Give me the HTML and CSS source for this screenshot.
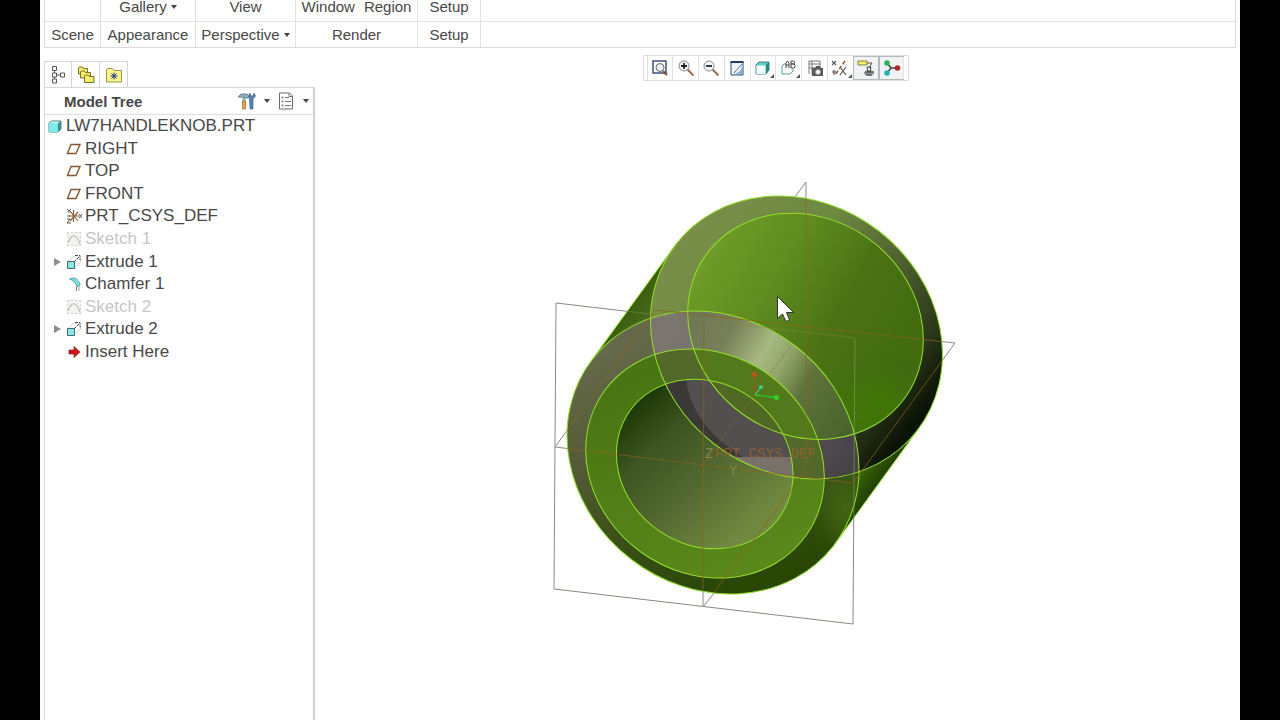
FILE: index.html
```html
<!DOCTYPE html>
<html lang="en">
<head>
<meta charset="UTF-8">
<meta name="viewport" content="width=device-width, initial-scale=1.0">
<title>LW7HANDLEKNOB.PRT</title>
<link rel="stylesheet" href="styles.css">
</head>
<body>
    <!-- shared tree icons -->
    <svg class="symbols" aria-hidden="true">
        <symbol id="plane" viewBox="0 0 16 16">
            <path d="M5 3.500h9L10 12.500H1.500z" fill="#fff" stroke="#84582f" stroke-width="1.400"/>
        </symbol>
        <symbol id="sketch" viewBox="0 0 16 16">
            <rect x="1" y="1" width="14" height="14" fill="#f3f4ef"/>
            <path d="M1 1.500h14M1 14.500h14M1.500 1v14M14.500 1v14" stroke="#d2d5ca" stroke-dasharray="2 2"/>
            <path d="M2 12C4 7 6 4 8.500 5s4 3 5.500 8" fill="none" stroke="#bfc4b8" stroke-width="1.300"/>
        </symbol>
        <symbol id="extrude" viewBox="0 0 16 16">
            <path d="M2 7.500l6-5.500M8.500 14l6-6V4" stroke="#b0b6b6" fill="none" stroke-dasharray="2 1"/>
            <path d="M8 8l5.500-5.500M9 1.500h5V6" stroke="#3c4747" fill="none" stroke-dasharray="3 1"/>
            <path d="M1.500 7.500h7v7h-7z" fill="#8de8e4" stroke="#3e6c70"/>
        </symbol>
    </svg>

    <div class="app">
        <div class="ribbon">
            <div class="ribbon-row ribbon-commands">
                <div class="cell scene"></div>
                <div class="cell appearance"><button type="button">Gallery<span class="caret"></span></button></div>
                <div class="cell perspective"><button type="button">View</button></div>
                <div class="cell render"><button type="button">Window</button><button type="button">Region</button></div>
                <div class="cell setup"><button type="button">Setup</button></div>
            </div>
            <div class="ribbon-row ribbon-groups">
                <div class="cell scene">Scene</div>
                <div class="cell appearance">Appearance</div>
                <div class="cell perspective"><button type="button">Perspective<span class="caret"></span></button></div>
                <div class="cell render">Render</div>
                <div class="cell setup">Setup</div>
            </div>
        </div>

        <div class="workspace">
            <aside class="sidebar">
                <div class="tabs">
                    <button type="button" class="tab active" aria-label="Model Tree">
                        <svg class="icon" viewBox="0 0 18 18"><path d="M5.500 4v10M5.500 9H11" stroke="#666" fill="none"/><path d="M3.500 .5h4v4h-4zM3.500 7h4v4h-4zM3.500 13h4v4h-4zM11.500 7h4v4h-4z" fill="#fff" stroke="#555"/></svg>
                    </button>
                    <button type="button" class="tab" aria-label="Folder Browser">
                        <svg class="icon" viewBox="0 0 18 18"><g fill="#f2ec68" stroke="#77702c"><path d="M1.500 8V2l1-1h3l1 1.500h4V8z"/><path d="M3.500 12V6l1-1h3l1 1.500h5V12z"/><path d="M7.500 16.500V10l1-1h3l1 1.500h4.500v6z"/></g></svg>
                    </button>
                    <button type="button" class="tab" aria-label="Favorites">
                        <svg class="icon" viewBox="0 0 18 18"><path d="M1.500 16V4l1-1.500h5L9 4.500h7.500V16z" fill="#f8f58a" stroke="#9a9650"/><path d="M9 6.500v7M5.500 10h7M6.500 7.500l5 5M11.500 7.500l-5 5" stroke="#233a86"/></svg>
                    </button>
                </div>
                <div class="panel">
                    <div class="panel-header">
                        <h2>Model Tree</h2>
                        <button type="button" class="menu" aria-label="Settings">
                            <svg class="icon" viewBox="0 0 18 18"><path d="M0 5l3-3h6l2 2-1 2H7L3 5z" fill="#8faebb" stroke="#54707d" stroke-width=".8"/><path d="M4.500 6h3v5h-3z" fill="#78b9c4"/><path d="M4.500 9h3v8h-3z" fill="#f0a33c" stroke="#9a642b" stroke-width=".7"/><path d="M11.500 7l-1-3L12 1l1 3h2l1-3 1.500 3-2.500 3v10h-3z" fill="#4f83c2" stroke="#53616e" stroke-width=".7"/></svg>
                            <span class="caret"></span>
                        </button>
                        <button type="button" class="menu" aria-label="Show">
                            <svg class="icon" viewBox="0 0 18 18"><path d="M2.500 1h10l3 3v13h-13z" fill="#fff" stroke="#6c6c6c"/><path d="M12 1v3.500h3.500M8 5.500h4M8 9.500h6M8 13.500h6" fill="none" stroke="#777"/><circle cx="5.500" cy="5.500" r="1" fill="#777"/><circle cx="5.500" cy="9.500" r="1" fill="#777"/><circle cx="5.500" cy="13.500" r="1" fill="#777"/></svg>
                            <span class="caret"></span>
                        </button>
                    </div>
                    <ul class="tree">
                        <li class="root"><svg class="node" viewBox="0 0 16 16"><path d="M2 5l3-2h9v8l-3 3H2z" fill="#d8fafa" stroke="#4b7c83"/><path d="M2 5h9v9H2z" fill="#7eeaea"/><path d="M11 5l3-2v8l-3 3z" fill="#3f8f96"/></svg>LW7HANDLEKNOB.PRT</li>
                        <li><svg class="node"><use href="#plane"/></svg>RIGHT</li>
                        <li><svg class="node"><use href="#plane"/></svg>TOP</li>
                        <li><svg class="node"><use href="#plane"/></svg>FRONT</li>
                        <li><svg class="node" viewBox="0 0 16 16"><path d="M7.500 2v12M3 8h10M4 13l8-9M4 3l8 10" stroke="#8f5d35" stroke-width="1.200"/><path d="M1 1l2 2 2-2M3 3v2M1 11h3l-3 4h4M13 6l3 4M16 6l-3 4M1 8h3" stroke="#444" fill="none" stroke-width=".9"/></svg>PRT_CSYS_DEF</li>
                        <li class="hidden-item"><svg class="node"><use href="#sketch"/></svg>Sketch 1</li>
                        <li><button type="button" class="expand" aria-label="Expand Extrude 1"></button><svg class="node"><use href="#extrude"/></svg>Extrude 1</li>
                        <li><svg class="node" viewBox="0 0 16 16"><path d="M3 3h3l7 7v5" fill="none" stroke="#9aa0a0"/><path d="M4 3l4-1c3 1 6 4 6 7l-3 2C10 7 8 5 4 3z" fill="#7bdfe4" stroke="#5aa0a8"/><path d="M10.500 11v4" stroke="#777"/></svg>Chamfer 1</li>
                        <li class="hidden-item"><svg class="node"><use href="#sketch"/></svg>Sketch 2</li>
                        <li><button type="button" class="expand" aria-label="Expand Extrude 2"></button><svg class="node"><use href="#extrude"/></svg>Extrude 2</li>
                        <li><svg class="node" viewBox="0 0 16 16"><path d="M3 6h5V2.500L14 8l-6 5.500V10H3z" fill="#cf1515" stroke="#8c0d0d" stroke-width=".6"/></svg>Insert Here</li>
                    </ul>
                </div>
            </aside>

            <main class="viewport">
                <div class="toolbar">
                    <button type="button" aria-label="Refit"><svg class="icon" viewBox="0 0 18 18"><path d="M2 2h13v12H2z" fill="#fff" stroke="#3c5378" stroke-width="1.500"/><path d="M12 12l4 4" stroke="#7c4d3a" stroke-width="2"/><circle cx="9" cy="8.500" r="4" fill="#e9f2f4" stroke="#666"/></svg></button>
                    <button type="button" aria-label="Zoom In"><svg class="icon" viewBox="0 0 18 18"><path d="M10.500 10.500l6 6" stroke="#9b694e" stroke-width="2"/><circle cx="7" cy="7" r="5" fill="#f3f7f7" stroke="#888"/><path d="M4 7h6M7 4v6" stroke="#222" stroke-width="1.800"/></svg></button>
                    <button type="button" aria-label="Zoom Out"><svg class="icon" viewBox="0 0 18 18"><path d="M10.500 10.500l6 6" stroke="#9b694e" stroke-width="2"/><circle cx="7" cy="7" r="5" fill="#f3f7f7" stroke="#888"/><path d="M4 7h6" stroke="#222" stroke-width="1.800"/></svg></button>
                    <button type="button" aria-label="Repaint"><svg class="icon" viewBox="0 0 18 18"><path d="M3 3h12v13H3z" fill="#eef7fb" stroke="#2d4c84"/><path d="M2.500 3h13" stroke="#1f3c78" stroke-width="2"/><path d="M4 15c5 0 10-3 10-9v9z" fill="#88afd4"/><path d="M6 14l8-9" stroke="#5b6d80"/></svg></button>
                    <button type="button" class="more" aria-label="Display Style"><svg class="icon" viewBox="0 0 18 18"><path d="M2 6l3-3h10v8l-3 4H2z" fill="#60cfc9" stroke="#47817f"/><path d="M2.500 6.500h9V15h-9z" fill="#f3ffff"/><path d="M12 6l3-3v8l-3 4z" fill="#248c87"/></svg></button>
                    <button type="button" class="more" aria-label="Saved Orientations"><svg class="icon" viewBox="0 0 18 18"><path d="M2 7l2-2h2M2 7v8h8l3-3v-2" fill="none" stroke="#54a5a7"/><path d="M6 9V4l1.500-2L9 4v5M6 6h3M11 9V2h2.500l1 1v1l-1 1H11h3l1 1v2l-1 1z" fill="none" stroke="#444"/></svg></button>
                    <button type="button" aria-label="View Manager"><svg class="icon" viewBox="0 0 18 18"><path d="M3 15V2h11v7M3 5h11M6 2v13M3 9h6" fill="none" stroke="#777"/><path d="M6 9h3l1-2h4l1 2h2v8H6z" fill="#565c59"/><circle cx="12" cy="13" r="2.500" fill="#fff" stroke="#999"/></svg></button>
                    <button type="button" class="more" aria-label="Datum Display"><svg class="icon" viewBox="0 0 18 18"><path d="M1 2l4 4M5 2L1 6M9 8l6 8M15 8l-6 8M3 11v5M1 13h4" stroke="#555" stroke-width="1.200"/><path d="M14 2L4 16" stroke="#a4562d" stroke-width="1.500" stroke-dasharray="4 2"/></svg></button>
                    <button type="button" class="pressed" aria-label="Annotation Display"><svg class="icon" viewBox="0 0 18 18"><path d="M1 2h9v4H1z" fill="#f4ef67" stroke="#858047"/><path d="M10 4h5l-3 5" fill="none" stroke="#555"/><ellipse cx="12" cy="14" rx="5" ry="3" fill="#8b9898"/><path d="M10 8h4l-1 5h-2zM8 13h9M9 16h6" fill="none" stroke="#414a4a"/></svg></button>
                    <button type="button" class="pressed" aria-label="Spin Center"><svg class="icon" viewBox="0 0 18 18"><path d="M4 4l4 5-4 5M8 9h6" fill="none" stroke="#444" stroke-width="1.500"/><circle cx="4" cy="4" r="2.800" fill="#2cb454"/><circle cx="4" cy="14" r="2.800" fill="#23b5ba"/><circle cx="14.500" cy="9" r="2.800" fill="#a62c2c"/></svg></button>
                </div>

                <svg class="scene3d" viewBox="315 90 921 630" role="img" aria-label="Handle knob model">
                    <defs>
                        <path id="hull" d="M590.300 362.200L673.800 247.200A152 134.200 37.700 0 1 919.200 427.800L835.700 542.800A152 134.200 37.700 0 1 590.300 362.200z"/>
                        <path id="sheet" d="M540 180H960V610H540z"/>
                        <ellipse id="backOuter" rx="152.400" ry="134.600" transform="translate(796.500 337.500) rotate(37.700)"/>
                        <ellipse id="backCap" rx="122.500" ry="108" transform="translate(805.500 326.300) rotate(35.500)"/>
                        <ellipse id="frontOuter" rx="152.400" ry="134.600" transform="translate(713 452.500) rotate(37.700)"/>
                        <ellipse id="frontFace" rx="124.100" ry="109.300" transform="translate(705 463.500) rotate(35.500)"/>
                        <ellipse id="hole" rx="91.800" ry="81" transform="translate(704.700 464) rotate(35.500)"/>
                        <clipPath id="hullClip"><use href="#hull"/></clipPath>
                        <clipPath id="backOuterClip"><use href="#backOuter"/></clipPath>
                        <clipPath id="backCapClip"><use href="#backCap"/></clipPath>
                        <clipPath id="frontClip"><use href="#frontOuter"/></clipPath>
                        <clipPath id="faceClip"><use href="#frontFace"/></clipPath>
                        <clipPath id="holeClip"><use href="#hole"/></clipPath>
                        <filter id="soft" x="-100%" y="-100%" width="300%" height="300%"><feGaussianBlur stdDeviation="14"/></filter>
                        <linearGradient id="bodyFill" gradientUnits="userSpaceOnUse" x1="630" y1="305" x2="878" y2="485">
                            <stop offset="0" stop-color="#3a5e0c"/><stop offset=".12" stop-color="#526f2c"/><stop offset=".8" stop-color="#487d0e"/><stop offset=".93" stop-color="#386408"/><stop offset="1" stop-color="#213f03"/>
                        </linearGradient>
                        <linearGradient id="backRingFill" gradientUnits="userSpaceOnUse" x1="690" y1="225" x2="925" y2="410">
                            <stop offset="0" stop-color="#788f48"/><stop offset=".35" stop-color="#6f8942"/><stop offset=".65" stop-color="#4b5d2c"/><stop offset=".85" stop-color="#2c3a1c"/><stop offset="1" stop-color="#0a1204"/>
                        </linearGradient>
                        <linearGradient id="capFill" gradientUnits="userSpaceOnUse" x1="700" y1="245" x2="900" y2="360">
                            <stop offset="0" stop-color="#719e28"/><stop offset=".35" stop-color="#608c20"/><stop offset=".65" stop-color="#4c7415"/><stop offset="1" stop-color="#426b10"/>
                        </linearGradient>
                        <linearGradient id="frontRingFill" gradientUnits="userSpaceOnUse" x1="640" y1="340" x2="730" y2="594">
                            <stop offset="0" stop-color="#65694b"/><stop offset=".35" stop-color="#555b38"/><stop offset=".65" stop-color="#3b5119"/><stop offset="1" stop-color="#294603"/>
                        </linearGradient>
                        <linearGradient id="shineFill" gradientUnits="userSpaceOnUse" x1="690" y1="330" x2="850" y2="425">
                            <stop offset="0" stop-color="#6f7757"/><stop offset=".2" stop-color="#798159"/><stop offset=".4" stop-color="#a6b980"/><stop offset=".52" stop-color="#93a76b"/><stop offset=".68" stop-color="#5f733c"/><stop offset="1" stop-color="#4a632c"/>
                        </linearGradient>
                        <linearGradient id="faceFill" gradientUnits="userSpaceOnUse" x1="650" y1="370" x2="740" y2="575">
                            <stop offset="0" stop-color="#4a7514"/><stop offset="1" stop-color="#5a881b"/>
                        </linearGradient>
                        <linearGradient id="holeFill" gradientUnits="userSpaceOnUse" x1="645" y1="400" x2="755" y2="525">
                            <stop offset="0" stop-color="#213a09"/><stop offset=".25" stop-color="#3c5521"/><stop offset=".55" stop-color="#506630"/><stop offset="1" stop-color="#71893f"/>
                        </linearGradient>
                        <linearGradient id="overlapRing" gradientUnits="userSpaceOnUse" x1="660" y1="330" x2="850" y2="460">
                            <stop offset="0" stop-color="#7b7570"/><stop offset=".3" stop-color="#77716c"/><stop offset="1" stop-color="#464246"/>
                        </linearGradient>
                    </defs>

                    <g class="datum">
                        <path d="M556 303L855 338L853 624L554 589z"/>
                        <path d="M806 182V477L703 607L704 320z"/>
                        <path d="M955 343L853 483L555 447L655 310z"/>
                    </g>

                    <use href="#hull" fill="url(#bodyFill)"/>
                    <use href="#sheet" clip-path="url(#backOuterClip)" fill="url(#backRingFill)"/>
                    <g clip-path="url(#backCapClip)">
                        <use href="#sheet" fill="url(#capFill)"/>
                        <ellipse cx="875" cy="410" rx="32" ry="28" fill="#3f7c05" opacity=".7" filter="url(#soft)"/>
                    </g>

                    <g clip-path="url(#frontClip)">
                        <use href="#sheet" fill="url(#frontRingFill)"/>
                        <ellipse cx="846" cy="510" rx="18" ry="32" fill="#4a7318" opacity=".8" filter="url(#soft)"/>
                        <use href="#sheet" clip-path="url(#backCapClip)" fill="url(#shineFill)"/>
                    </g>
                    <use href="#sheet" clip-path="url(#faceClip)" fill="url(#faceFill)"/>
                    <use href="#sheet" clip-path="url(#holeClip)" fill="url(#holeFill)"/>

                    <!-- back end seen through the front of the part -->
                    <g clip-path="url(#backOuterClip)">
                        <g clip-path="url(#frontClip)">
                            <use href="#sheet" fill="url(#overlapRing)"/>
                            <use href="#sheet" clip-path="url(#backCapClip)" fill="url(#shineFill)"/>
                        </g>
                        <use href="#frontFace" fill="#53692b"/>
                        <g clip-path="url(#faceClip)"><use href="#backCap" fill="#52791b"/></g>
                        <g clip-path="url(#holeClip)">
                            <path d="M600 370H810V490H600z" fill="#3b3838"/>
                            <path d="M686 378C689 410 710 438 745 458H810V370z" fill="#534f4e"/>
                            <path d="M735 457H800V485H735z" fill="#77716a"/>
                            <use href="#backCap" fill="#4f6924"/>
                        </g>
                    </g>

                    <g class="edges">
                        <path d="M590.300 362.200L673.800 247.200M919.200 427.800L835.700 542.800"/>
                        <use href="#backOuter"/>
                        <use href="#backCap"/>
                        <use href="#frontOuter"/>
                        <use href="#frontFace"/>
                        <use href="#hole"/>
                    </g>

                    <g class="datum-inside" clip-path="url(#hullClip)">
                        <path class="faint" d="M556 303L855 338"/>
                        <path class="side" d="M855 338L853 624"/>
                        <path d="M806 182V466L800 478L703 607L704 320"/>
                        <path d="M955 343L853 483L555 447L655 310z"/>
                        <path stroke-dasharray="3 2" d="M790 347L704 463"/>
                        <path d="M696 474L712 453M700 432L706 438"/>
                    </g>
                    <text class="csys" x="715" y="458">PRT_CSYS_DEF</text>
                    <text class="csys axis" x="705" y="458">Z</text>
                    <text class="csys axis" x="729" y="475">Y</text>

                    <g fill="none" stroke-width="1.300">
                        <path d="M755 395V375" stroke="#a5551c"/>
                        <path d="M755 395L761 387" stroke="#35c878"/>
                        <path d="M755 395L776 397.500" stroke="#2cc42a"/>
                    </g>
                    <circle cx="754.500" cy="374.500" r="2.500" fill="#bf541b"/>
                    <circle cx="761" cy="387" r="2" fill="#3ccb8a"/>
                    <circle cx="776.500" cy="397.500" r="2.500" fill="#2fd22a"/>
                    <path d="M777.500 296.500V318.500L782.500 314L786 321.500L789.500 320L786.500 312.500H793.500z" fill="#fff" stroke="#333"/>
                </svg>
            </main>
        </div>
    </div>
</body>
</html>
```

FILE: styles.css
```css
body {
    margin: 0;
    background-color: #000;
    color: #484848;
    font-family: "Liberation Sans", Arial, sans-serif;
    font-size: 15px;
}
button {
    padding: 0;
    border: none;
    background: none;
    color: inherit;
    font: inherit;
    cursor: pointer;
}
.symbols {
    position: absolute;
    width: 0;
    height: 0;
}
.app {
    display: flex;
    flex-direction: column;
    min-height: 100vh;
    margin: 0 40px;
    background-color: #fff;
}

/* ribbon */
.ribbon {
    margin: 0 4px;
    border: 1px solid #dcdcdc;
    border-top: none;
}
.ribbon-row {
    display: flex;
}
.ribbon-commands {
    height: 21px;
    line-height: 14px;
    border-bottom: 1px solid #e2e2e2;
}
.ribbon-groups {
    height: 25px;
    line-height: 25px;
}
.cell {
    display: flex;
    justify-content: center;
    gap: 9px;
    box-sizing: border-box;
    border-right: 1px solid #e2e2e2;
    white-space: nowrap;
}
.ribbon-commands .cell {
    align-items: flex-start;
}
.scene {
    width: 56px;
}
.appearance {
    width: 95px;
}
.perspective {
    width: 100px;
}
.render {
    width: 122px;
}
.setup {
    width: 63px;
}
.caret {
    display: inline-block;
    margin-left: 4px;
    border: 3px solid transparent;
    border-top: 4px solid #444;
    border-bottom: none;
    vertical-align: 3px;
}

/* model tree */
.workspace {
    display: flex;
    flex: 1;
}
.sidebar {
    display: flex;
    flex-direction: column;
    width: 271px;
    margin-left: 4px;
    padding-top: 13px;
}
.tabs {
    display: flex;
    height: 26px;
}
.tab {
    display: flex;
    align-items: center;
    justify-content: center;
    width: 28px;
    border: 1px solid #d6d6d6;
    border-left: none;
    border-bottom: none;
}
.tab.active {
    border-left: 1px solid #d6d6d6;
}
.icon {
    display: block;
    width: 18px;
    height: 18px;
}
.panel {
    flex: 1;
    border: 1px solid #d6d6d6;
    border-right: 2px solid #cfcfcf;
    border-bottom: none;
}
.panel-header {
    display: flex;
    align-items: center;
    height: 26px;
    padding-right: 4px;
    border-bottom: 1px solid #dedede;
}
.panel-header h2 {
    flex: 1;
    margin: 0 0 0 19px;
    font-size: 15px;
}
.menu {
    display: flex;
    align-items: center;
    gap: 4px;
    margin-left: 7px;
}
.tree {
    display: grid;
    grid-auto-rows: 1fr;
    height: 248px;
    margin: 0;
    padding: 0;
    list-style: none;
    font-size: 17px;
}
.tree li {
    display: flex;
    align-items: center;
    padding-left: 21px;
    position: relative;
}
.tree .root {
    padding-left: 2px;
}
.node {
    width: 16px;
    height: 16px;
    margin-right: 3px;
}
.hidden-item {
    color: #c6c6c6;
}
.expand {
    position: absolute;
    left: 9px;
    border: 4px solid transparent;
    border-left: 7px solid #8c8c8c;
    border-right: none;
}

/* graphics area */
.viewport {
    flex: 1;
    min-width: 0;
    padding: 7px 4px 0 0;
}
.toolbar {
    display: grid;
    grid-template-columns: repeat(10, 1fr);
    box-sizing: border-box;
    width: 266px;
    height: 26px;
    margin: 0 auto 9px;
    padding: 0 3px;
    border: 1px solid #dedede;
}
.toolbar button {
    display: flex;
    align-items: center;
    justify-content: center;
    position: relative;
    border-left: 1px solid #e2e2e2;
}
.toolbar button:last-child {
    border-right: 1px solid #e2e2e2;
}
.toolbar .pressed {
    border: 1px solid #b4b9bd;
    background-color: #f0f2f3;
}
.more::after {
    content: "";
    position: absolute;
    right: 1px;
    bottom: 2px;
    border: 2px solid #555;
    border-top-color: transparent;
    border-left-color: transparent;
}
.scene3d {
    display: block;
    width: 100%;
}
.datum {
    fill: none;
    stroke: #8d8883;
}
.datum-inside {
    fill: none;
    stroke: #8c651a;
    stroke-opacity: .7;
}
.datum-inside .faint {
    stroke: #7f8b45;
    stroke-opacity: .5;
}
.datum-inside .side {
    stroke: #7d9660;
}
.edges {
    fill: none;
    stroke: #94df2c;
    stroke-width: 1px;
}
.csys {
    fill: #9b622e;
    fill-opacity: .75;
    font-family: "Liberation Mono", monospace;
    font-size: 14px;
}
.csys.axis {
    fill: #929454;
}
```
